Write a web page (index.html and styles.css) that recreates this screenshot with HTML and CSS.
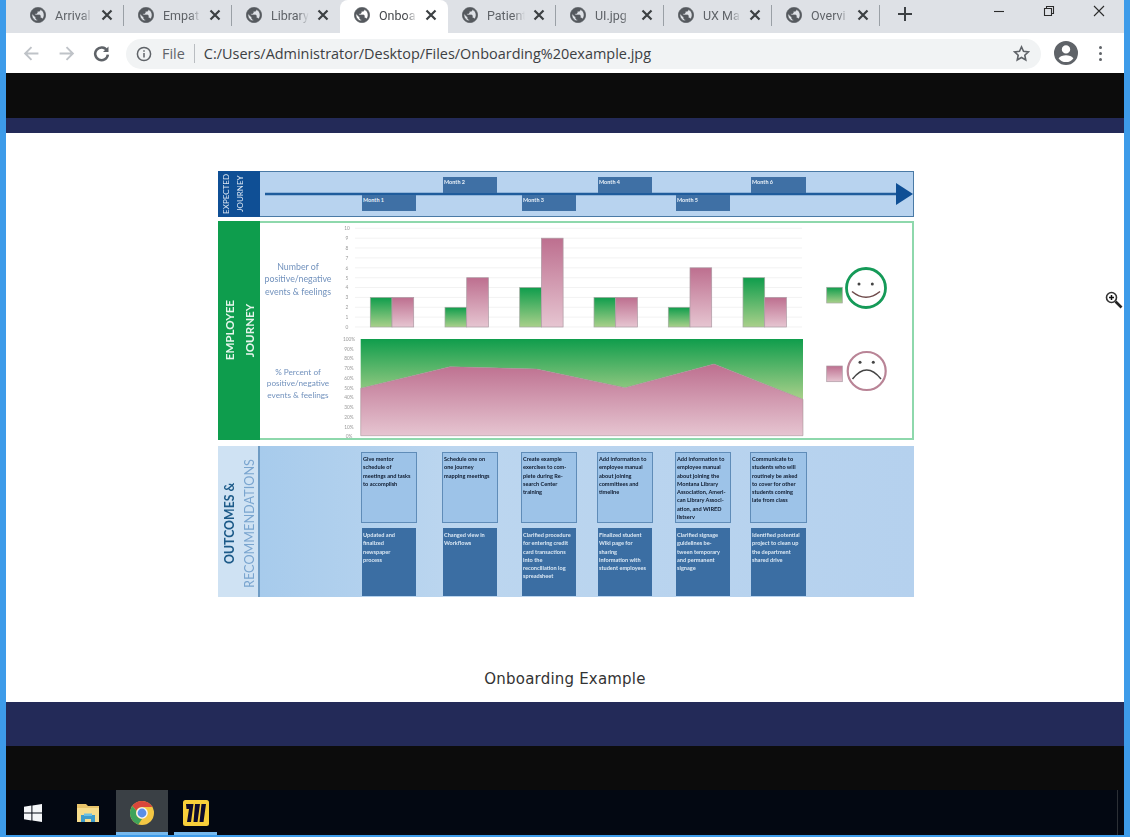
FILE: index.html
```html
<!DOCTYPE html>
<html lang="en">
<head>
<meta charset="utf-8">
<title>Onboarding example.jpg</title>
<link rel="stylesheet" href="styles.css">
</head>
<body>
<svg class="defs" width="0" height="0" aria-hidden="true">
  <defs>
    <symbol id="globe" viewBox="1.500 1.500 21 21"><path d="M12 2C6.48 2 2 6.48 2 12s4.48 10 10 10 10-4.48 10-10S17.52 2 12 2zm-1 17.93c-3.95-.49-7-3.85-7-7.93 0-.62.08-1.21.21-1.79L9 15v1c0 1.100.9 2 2 2v1.930zm6.900-2.540c-.26-.81-1-1.390-1.900-1.390h-1v-3c0-.55-.45-1-1-1H8v-2h2c.55 0 1-.45 1-1V7h2c1.100 0 2-.9 2-2v-.41c2.930 1.190 5 4.060 5 7.410 0 2.080-.8 3.970-2.100 5.390z"/></symbol>
    <symbol id="x" viewBox="0 0 12 12"><path d="M1.500 1.500l9 9M10.500 1.500l-9 9"/></symbol>
    <linearGradient id="gGreen" x1="0" y1="0" x2="0" y2="1"><stop offset="0" stop-color="#0f9d4c"/><stop offset="1" stop-color="#a9d08a"/></linearGradient>
    <linearGradient id="gPink" x1="0" y1="0" x2="0" y2="1"><stop offset="0" stop-color="#bd6f8f"/><stop offset="1" stop-color="#e6c5d1"/></linearGradient>
  </defs>
</svg>
<div class="window">
  <div class="tabstrip">
    <div class="tab"><svg class="fav"><use href="#globe"/></svg><span class="title">Arrival</span><svg class="close"><use href="#x"/></svg></div>
    <div class="tab"><svg class="fav"><use href="#globe"/></svg><span class="title">Empat</span><svg class="close"><use href="#x"/></svg></div>
    <div class="tab nosep"><svg class="fav"><use href="#globe"/></svg><span class="title">Library</span><svg class="close"><use href="#x"/></svg></div>
    <div class="tab active"><svg class="fav"><use href="#globe"/></svg><span class="title">Onboa</span><svg class="close"><use href="#x"/></svg></div>
    <div class="tab"><svg class="fav"><use href="#globe"/></svg><span class="title">Patient</span><svg class="close"><use href="#x"/></svg></div>
    <div class="tab"><svg class="fav"><use href="#globe"/></svg><span class="title">UI.jpg</span><svg class="close"><use href="#x"/></svg></div>
    <div class="tab"><svg class="fav"><use href="#globe"/></svg><span class="title">UX Ma</span><svg class="close"><use href="#x"/></svg></div>
    <div class="tab"><svg class="fav"><use href="#globe"/></svg><span class="title">Overvi</span><svg class="close"><use href="#x"/></svg></div>
    <svg class="newtab" viewBox="0 0 16 16"><path d="M8 1v14M1 8h14"/></svg>
    <div class="winctl">
      <div class="winbtn"><svg viewBox="0 0 12 12"><path d="M1 6.500h10"/></svg></div>
      <div class="winbtn"><svg viewBox="0 0 12 12"><path d="M1.500 3.500h7v7h-7zM3.500 3.500v-2h7v7h-2"/></svg></div>
      <div class="winbtn"><svg viewBox="0 0 12 12"><path d="M1 1l10 10M11 1L1 11"/></svg></div>
    </div>
  </div>

  <div class="toolbar">
    <div class="navbtn dim"><svg viewBox="0 0 16 16"><path d="M14.500 8H2M8 2L2 8l6 6"/></svg></div>
    <div class="navbtn dim"><svg viewBox="0 0 16 16"><path d="M1.500 8H14M8 2l6 6-6 6"/></svg></div>
    <div class="navbtn"><svg viewBox="0 0 16 16"><path class="thick" d="M13.200 5.200A6 6 0 1 0 14 9"/><path class="solid" d="M14.600 1.500v5.200H9.400z"/></svg></div>
    <div class="omnibox">
      <svg class="info" viewBox="0 0 16 16"><circle cx="8" cy="8" r="6.600"/><path d="M8 7v4.600M8 4.200v1.600"/></svg>
      <span class="scheme">File</span>
      <span class="omnisep"></span>
      <span class="url">C:/Users/Administrator/Desktop/Files/Onboarding%20example.jpg</span>
      <svg class="star" viewBox="0 0 16 16"><path d="M8 1.800l1.900 4.200 4.600.5-3.400 3.100.9 4.500L8 11.800l-4 2.300.9-4.500L1.500 6.500 6.100 6z"/></svg>
    </div>
    <div class="avatar"><svg viewBox="0 0 24 24"><path d="M12 0a12 12 0 1 0 0 24 12 12 0 0 0 0-24zm0 4.200a4.200 4.200 0 1 1 0 8.400 4.200 4.200 0 0 1 0-8.400zm0 16.900a9.300 9.300 0 0 1-7.400-3.700c1.100-2 4.700-3.100 7.400-3.100s6.300 1.100 7.400 3.100a9.300 9.300 0 0 1-7.400 3.700z"/></svg></div>
    <div class="menu"><i></i><i></i><i></i></div>
  </div>

  <div class="band black top"></div>
  <div class="band navy thin"></div>

  <main class="page">
    <div class="diagram">
      <section class="row journey">
        <div class="side side-blue"><span>EXPECTED<br>JOURNEY</span></div>
        <div class="body timeline">
          <svg class="arrow" viewBox="0 0 654 44"><path class="axis" d="M5 22H638"/><path class="head" d="M636 11l17 11-17 11z"/></svg>
          <div class="month m1">Month 1</div>
          <div class="month m2">Month 2</div>
          <div class="month m3">Month 3</div>
          <div class="month m4">Month 4</div>
          <div class="month m5">Month 5</div>
          <div class="month m6">Month 6</div>
        </div>
      </section>

      <section class="row employee">
        <div class="side side-green"><span>EMPLOYEE<br>JOURNEY</span></div>
        <div class="body charts">
          <svg class="chart" viewBox="260 221 654 219" width="654" height="219">
            <g class="grid">
              <path d="M355 228.300H802M355 238.200H802M355 248H802M355 257.900H802M355 267.800H802M355 277.700H802M355 287.500H802M355 297.400H802M355 307.300H802M355 317.100H802M355 327H802"/>
            </g>
            <g class="tick">
              <text x="347" y="230">10</text><text x="347" y="240">9</text><text x="347" y="250">8</text><text x="347" y="260">7</text><text x="347" y="270">6</text><text x="347" y="279.500">5</text><text x="347" y="289">4</text><text x="347" y="299">3</text><text x="347" y="309">2</text><text x="347" y="319">1</text><text x="347" y="329">0</text>
              <text x="349" y="341">100%</text><text x="349" y="350.500">90%</text><text x="349" y="360">80%</text><text x="349" y="370">70%</text><text x="349" y="380">60%</text><text x="349" y="389.500">50%</text><text x="349" y="399">40%</text><text x="349" y="409">30%</text><text x="349" y="419">20%</text><text x="349" y="428.500">10%</text><text x="349" y="438">0%</text>
            </g>
            <g class="bars">
              <rect class="gb" x="370.300" y="297.400" width="21.700" height="29.600"/><rect class="pb" x="392" y="297.400" width="21.700" height="29.600"/>
              <rect class="gb" x="445" y="307.300" width="21.700" height="19.700"/><rect class="pb" x="466.700" y="277.700" width="21.700" height="49.300"/>
              <rect class="gb" x="519.700" y="287.500" width="21.700" height="39.500"/><rect class="pb" x="541.400" y="238.200" width="21.700" height="88.800"/>
              <rect class="gb" x="594" y="297.400" width="21.700" height="29.600"/><rect class="pb" x="615.700" y="297.400" width="21.700" height="29.600"/>
              <rect class="gb" x="668.300" y="307.300" width="21.700" height="19.700"/><rect class="pb" x="690" y="267.800" width="21.700" height="59.200"/>
              <rect class="gb" x="743" y="277.700" width="21.700" height="49.300"/><rect class="pb" x="764.700" y="297.400" width="21.700" height="29.600"/>
            </g>
            <path class="ag" d="M360.700 339H803V399.300L714 364 625 387.700 536.700 369 450 366.700 360.700 388.300z"/>
            <path class="ap" d="M360.700 388.300L450 366.700 536.700 369 625 387.700 714 364 803 399.300V435.700H360.700z"/>
            <text class="lab" x="298" y="270">Number of</text>
            <text class="lab" x="298" y="282">positive/negative</text>
            <text class="lab" x="298" y="295">events &amp; feelings</text>
            <text class="lab lab2" x="298" y="374.500">% Percent of</text>
            <text class="lab lab2" x="298" y="386">positive/negative</text>
            <text class="lab lab2" x="298" y="397.500">events &amp; feelings</text>
            <rect class="gb key" x="826.700" y="287.300" width="15.600" height="15.700"/>
            <circle class="happy" cx="866" cy="288" r="19.500"/>
            <circle class="eye" cx="859" cy="284" r="1.500"/><circle class="eye" cx="872.300" cy="284" r="1.500"/>
            <path class="smile" d="M852 291.500Q866 303 880 291.500"/>
            <rect class="pb key" x="826.700" y="366" width="15.600" height="15.700"/>
            <circle class="sad" cx="866.700" cy="371" r="19"/>
            <circle class="eye" cx="860" cy="362.300" r="1.500"/><circle class="eye" cx="873.300" cy="362.300" r="1.500"/>
            <path class="frown" d="M852.500 379Q866.700 361 881 379"/>
            <path class="topline" d="M260 222H340M807 222H913"/>
          </svg>
        </div>
      </section>

      <section class="row outcomes">
        <div class="side side-light"><span><b>OUTCOMES &amp;</b><br>RECOMMENDATIONS</span></div>
        <div class="body cards">
          <div class="card up c1">Give mentor schedule of meetings and tasks to accomplish</div>
          <div class="card up c2">Schedule one on one journey mapping meetings</div>
          <div class="card up c3">Create example exercises to com-<br>plete during Re-<br>search Center training</div>
          <div class="card up c4">Add information to employee manual about joining committees and timeline</div>
          <div class="card up c5">Add information to employee manual about joining the Montana Library Association, Ameri-<br>can Library Associ-<br>ation, and WIRED listserv</div>
          <div class="card up c6">Communicate to students who will routinely be asked to cover for other students coming late from class</div>
          <div class="card down c1">Updated and<br>finalized<br>newspaper<br>process</div>
          <div class="card down c2">Changed view in Workflows</div>
          <div class="card down c3">Clarified procedure for entering credit card transactions into the<br>reconciliation log spreadsheet</div>
          <div class="card down c4">Finalized student Wiki page for<br>sharing<br>information with student employees</div>
          <div class="card down c5">Clarified signage guidelines be-<br>tween temporary and permanent signage</div>
          <div class="card down c6">Identified potential project to clean up the department shared drive</div>
        </div>
      </section>
    </div>
    <p class="caption">Onboarding Example</p>
    <svg class="zoomcursor" viewBox="0 0 18 18"><circle cx="6.500" cy="6.500" r="5"/><path class="plus" d="M4 6.500h5M6.500 4v5"/><path class="handle" d="M10.500 10.500l6 6"/></svg>
  </main>

  <div class="band navy thick"></div>
  <div class="band black bottom"></div>

  <div class="taskbar">
    <div class="task win"><svg viewBox="0 0 18 18"><path d="M0 2.700L7.400 1.600V8.500H0zM8.400 1.500L18 0V8.500H8.400zM0 9.500H7.400V16.400L0 15.300zM8.400 9.500H18V18L8.400 16.500z"/></svg></div>
    <div class="task folder"><svg viewBox="0 0 24 20"><path class="f1" d="M1 1h9l2 2h11v15H1z"/><path class="f2" d="M1 5h22v14H1z"/><path class="f3" d="M5 12h14v7h-4v-3H9v3H5z"/><path class="f4" d="M8 10.500h8V13H8z"/></svg></div>
    <div class="task chrome on">
      <svg viewBox="0 0 24 24"><circle cx="12" cy="12" r="12" fill="#f3c744"/><path fill="#d9473c" d="M12 0a12 12 0 0 1 10.400 6H12a6 6 0 0 0-5.600 3.700L2.300 4.900A12 12 0 0 1 12 0z"/><path fill="#3fa35a" d="M2.300 4.900l4.100 4.800A6 6 0 0 0 12 18l-3.700 5.400A12 12 0 0 1 2.300 4.900z"/><circle cx="12" cy="12" r="5.800" fill="#f4f6fa"/><circle cx="12" cy="12" r="4.400" fill="#5a8fe8"/></svg>
    </div>
    <div class="task miro on">
      <svg viewBox="0 0 26 26"><rect width="26" height="26" rx="2.500" fill="#f8cf3a"/><path fill="#0d0a2c" d="M3 4h7.500L8 22H4l2-13H3.500zM12 4h5l-2.500 18h-4zM18.500 4H23l-2.500 18h-4z"/></svg>
    </div>
    <div class="showdesk"></div>
  </div>
</div>
</body>
</html>
```
FILE: styles.css
```css
* { box-sizing: border-box; }
html, body { margin: 0; padding: 0; }
body { width: 1130px; height: 837px; overflow: hidden; background: #3d9be9; font-family: "Open Sans", "Liberation Sans", sans-serif; }
.defs { position: absolute; }

.window { height: 835px; margin: 0 6px 2px; display: flex; flex-direction: column; background: #fff; position: relative; }

/* tab strip */
.tabstrip { height: 33px; flex: none; display: flex; align-items: stretch; padding-left: 10px; background: #dee1e6; }
.tab { width: 108px; flex: none; display: flex; align-items: center; padding: 0 0 3px 14px; position: relative; color: #5f6368; font-family: Roboto, "Liberation Sans", sans-serif; font-size: 12.500px; }
.tab::after { content: ""; position: absolute; right: 0; top: 5px; height: 21px; width: 1px; background: #9aa0a6; }
.tab.nosep::after, .tab.active::after { display: none; }
.tab.active { background: #fff; border-radius: 8px 8px 0 0; color: #45484c; }
.fav { width: 16px; height: 16px; flex: none; fill: #55595e; stroke: #55595e; stroke-width: 0.900; }
.title { width: 38px; margin-left: 9px; white-space: nowrap; -webkit-mask-image: linear-gradient(to right, #000 70%, transparent 100%); mask-image: linear-gradient(to right, #000 70%, transparent 100%); }
.close { width: 12px; height: 12px; margin-left: 8px; flex: none; fill: none; stroke: #3c4043; stroke-width: 2.200; }
.newtab { width: 16px; height: 16px; margin: 6px 0 0 17px; flex: none; fill: none; stroke: #3c4043; stroke-width: 2; }
.winctl { margin-left: auto; display: flex; align-items: flex-start; }
.winbtn { width: 50px; height: 22px; display: flex; align-items: center; justify-content: center; }
.winbtn svg { width: 12px; height: 12px; fill: none; stroke: #2b2b2b; stroke-width: 1.100; }

/* toolbar */
.toolbar { height: 40px; flex: none; display: flex; align-items: center; padding: 0 7px 0 8px; background: #fff; }
.navbtn { width: 35px; display: flex; justify-content: center; }
.navbtn svg { width: 17px; height: 17px; fill: none; stroke: #5f6368; stroke-width: 1.800; }
.navbtn.dim svg { stroke: #bfc3c8; }
.navbtn .solid { fill: #5f6368; stroke: none; }
.navbtn .thick { stroke-width: 2.400; }
.omnibox { flex: 1; height: 30px; margin-left: 7px; margin-top: 1px; display: flex; align-items: center; padding: 0 11px 0 10px; border-radius: 15px; background: #f1f3f4; font-size: 14.450px; color: #3c4043; }
.info { width: 16px; height: 16px; flex: none; fill: none; stroke: #5f6368; stroke-width: 1.500; }
.scheme { margin-left: 10px; color: #5f6368; }
.omnisep { width: 1px; height: 19px; margin: 0 9px; background: #b9bdc1; }
.url { white-space: nowrap; }
.star { width: 17px; height: 17px; margin-left: auto; fill: none; stroke: #5f6368; stroke-width: 1.500; }
.avatar { width: 35px; margin-left: 7px; display: flex; justify-content: center; }
.avatar svg { width: 24px; height: 24px; fill: #5f6368; }
.menu { width: 34px; display: flex; flex-direction: column; align-items: center; gap: 3px; }
.menu i { width: 3px; height: 3px; border-radius: 50%; background: #5f6368; }

/* dark bands */
.band { flex: none; }
.black { background: #0c0c0c; }
.navy { background: #232a58; }
.top { height: 45px; }
.thin { height: 15px; }
.thick { height: 44px; }
.bottom { height: 44px; }

/* image page */
.page { height: 569px; flex: none; display: flex; flex-direction: column; background: #fff; position: relative; }
.diagram { width: 696px; margin: 38px 0 0 212px; font-family: Lato, "Liberation Sans", sans-serif; filter: blur(0.4px); }
.row { display: grid; grid-template-columns: 42px 1fr; }
.journey { height: 46px; }
.employee { height: 219px; margin-top: 4px; }
.outcomes { height: 151px; margin-top: 6px; }

.side { display: flex; align-items: center; justify-content: center; }
.side span { writing-mode: vertical-rl; transform: rotate(180deg); text-align: center; white-space: nowrap; }
.side-blue { background: #0f4f95; color: #dfe9f4; font-size: 8px; line-height: 14px; padding-right: 12px; }
.side-green { background: #0e9d4d; color: #e6f5ec; font-size: 11.600px; font-weight: 700; line-height: 20px; padding-left: 2px; }
.side-light { background: #cfe2f3; box-shadow: inset -2px 0 0 #6f9cc4; color: #7aa5cf; font-size: 12.700px; line-height: 18.500px; padding: 3px 0 0 1px; }
.side-light b { color: #1c5a88; font-size: 12.300px; }

.body { --tracks: 102px 54px 27px 54px 25px 54px 22px 54px 24px 54px 21px 55px; position: relative; }
.timeline { display: grid; grid-template-columns: var(--tracks); grid-template-rows: 16px 16px; row-gap: 2px; padding-top: 5px; border: 1px solid #4a7aa6; border-left: 0; background: #b8d3ef; }
.arrow { position: absolute; left: 0; top: 0; width: 654px; height: 44px; }
.axis { stroke: #1f5c9c; stroke-width: 2.500; fill: none; }
.head { fill: #0f4f95; }
.month { position: relative; padding: 1px 0 0 1px; background: #3f70a5; color: #e8f0f8; font-size: 5.500px; line-height: 8px; font-weight: 700; }
.m1, .m3, .m5 { grid-row: 2; }
.m2, .m4, .m6 { grid-row: 1; }
.c1 { grid-column: 2; }
.m1 { grid-column: 2; }
.m2, .c2 { grid-column: 4; }
.m3, .c3 { grid-column: 6; }
.m4, .c4 { grid-column: 8; }
.m5, .c5 { grid-column: 10; }
.m6, .c6 { grid-column: 12; }

.charts { background: #fff; }
.charts::after { content: ""; position: absolute; inset: 0; border: 2px solid #8ed8ac; border-left: 0; pointer-events: none; }
.chart { display: block; position: relative; }
.topline { stroke: #2ea866; stroke-width: 1.500; fill: none; }
.grid path { stroke: #ececec; stroke-width: 0.700; fill: none; }
.tick text { fill: #9a9a9a; font-size: 4.800px; text-anchor: middle; }
.gb { fill: url(#gGreen); stroke: #a3a9a0; stroke-width: 0.700; }
.pb { fill: url(#gPink); stroke: #ad9aa3; stroke-width: 0.700; }
.ag { fill: url(#gGreen); }
.ap { fill: url(#gPink); stroke: #9a8c8e; stroke-width: 0.500; }
.lab { fill: #7292bd; font-size: 8.800px; text-anchor: middle; }
.lab2 { font-size: 8.200px; }
.happy { fill: #fff; stroke: #159a58; stroke-width: 2.800; }
.sad { fill: #fff; stroke: #b98496; stroke-width: 2.200; }
.eye { fill: #444; }
.smile { fill: none; stroke: #6e4a4a; stroke-width: 1.600; }
.frown { fill: none; stroke: #444; stroke-width: 1.500; }

.cards { display: grid; grid-template-columns: var(--tracks); grid-template-rows: 71px 68px; row-gap: 5px; padding-top: 6px; background: linear-gradient(to right, #a7cbec, #bcd6ef 30%, #b5d1ee); }
.card { padding: 2px 1px 0 1px; font-size: 5.600px; line-height: 8.300px; font-weight: 700; overflow: hidden; }
.up { margin: 0 -1px; padding: 2px 3px 0 1px; background: #9dc3e8; border: 1px solid #5f8cb8; color: #0e1a2e; }
.down { background: #3b6ea3; color: #dbe8f4; padding-top: 3px; }

.caption { align-self: center; margin: 72px 0 0; font-family: "DejaVu Sans", sans-serif; font-size: 15px; line-height: 20px; letter-spacing: 0.200px; color: #333; }
.zoomcursor { position: absolute; left: 1099px; top: 158px; width: 18px; height: 18px; fill: #fff; stroke: #333; stroke-width: 1.600; }
.zoomcursor .plus { fill: none; stroke: #111; stroke-width: 1.500; }
.zoomcursor .handle { fill: none; stroke: #222; stroke-width: 2.600; }

/* taskbar */
.taskbar { height: 45px; flex: none; display: flex; align-items: stretch; padding-left: 3px; background: #030812; }
.task { display: flex; align-items: center; justify-content: center; border-bottom: 3px solid transparent; padding-top: 3px; }
.win { width: 48px; }
.win svg { width: 18px; height: 18px; fill: #f4f6f8; }
.folder { width: 56px; margin-left: 3px; }
.folder svg { width: 24px; height: 20px; }
.f1 { fill: #e9c46a; }
.f2 { fill: #f7dd8c; }
.f3 { fill: #3e9ccb; }
.f4 { fill: #6cc0e5; }
.chrome { width: 52px; background: #3a4045; }
.chrome svg { width: 24px; height: 24px; }
.miro { width: 43px; margin-left: 6px; }
.miro svg { width: 26px; height: 26px; }
.on { border-bottom-color: #76b9ed; }
.showdesk { margin-left: auto; width: 1px; margin-right: 6px; background: #2c3036; }
```
